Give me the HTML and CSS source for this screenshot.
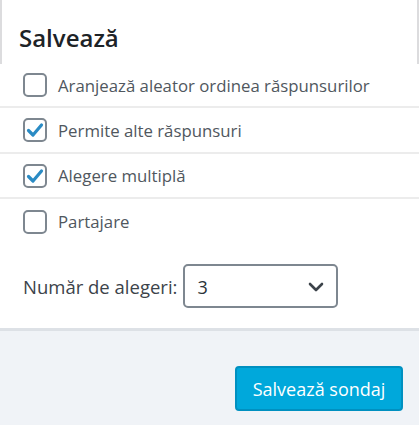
FILE: index.html
```html
<!DOCTYPE html>
<html lang="ro">
<head>
<meta charset="utf-8">
<link rel="stylesheet" href="styles.css">
</head>
<body>
<div class="panel">
  <div class="header"><h2 class="title">Salvează</h2></div>
  <ul class="options">
    <li class="option"><span class="box"></span><span class="label">Aranjează aleator ordinea răspunsurilor</span></li>
    <li class="option"><span class="box checked"><svg viewBox="0 0 20 20" width="20" height="20"><path d="M3.5 10.5 L8 15 L16.5 5" fill="none" stroke="#2a8bc4" stroke-width="3.2" stroke-linecap="round" stroke-linejoin="round"/></svg></span><span class="label">Permite alte răspunsuri</span></li>
    <li class="option"><span class="box checked"><svg viewBox="0 0 20 20" width="20" height="20"><path d="M3.5 10.5 L8 15 L16.5 5" fill="none" stroke="#2a8bc4" stroke-width="3.2" stroke-linecap="round" stroke-linejoin="round"/></svg></span><span class="label">Alegere multiplă</span></li>
    <li class="option"><span class="box"></span><span class="label">Partajare</span></li>
  </ul>
  <div class="choices">
    <span class="choices-label">Număr de alegeri:</span>
    <div class="select"><span class="select-value">3</span><svg class="chev" viewBox="0 0 16 10" width="16" height="10"><path d="M2 2 L8 8 L14 2" fill="none" stroke="#3c434a" stroke-width="2.6" stroke-linecap="round" stroke-linejoin="round"/></svg></div>
  </div>
</div>
<div class="footer">
  <button class="save">Salvează sondaj</button>
</div>
</body>
</html>
```
FILE: styles.css
```css
* { box-sizing: border-box; }
html, body { margin: 0; padding: 0; }
body {
  width: 419px;
  height: 425px;
  background: #f0f3f7;
  font-family: "Open Sans", "Noto Sans", sans-serif;
  overflow: hidden;
}
.panel {
  background: #fff;
  border-bottom: 3px solid #dde1e6;
}
.header {
  height: 64px;
  border-left: 2px solid #dcdcde;
  border-right: 2px solid #dcdcde;
  padding: 23px 0 0 17px;
}
.title {
  margin: 0;
  font-size: 24px;
  font-weight: 600;
  color: #1d2327;
  line-height: 30px;
}
.options {
  list-style: none;
  margin: 0;
  padding: 0;
}
.option {
  display: flex;
  align-items: center;
  height: 45px;
  padding-left: 23px;
  border-bottom: 2px solid #ececec;
}
.option:nth-child(1) { height: 44px; }
.option:nth-child(2) { height: 46px; }
.option:last-child { border-bottom: 0; }
.box {
  width: 24px;
  height: 24px;
  border: 2px solid #7e8790;
  border-radius: 5px;
  display: flex;
  align-items: center;
  justify-content: center;
  flex: none;
}
.label {
  margin-left: 11px;
  font-size: 16.8px;
  color: #50575e;
}
.choices {
  display: flex;
  align-items: center;
  padding: 20px 0 20px 23px;
}
.choices-label {
  font-size: 18.5px;
  color: #3c434a;
  margin-right: 6px;
}
.select {
  width: 155px;
  height: 44px;
  border: 2px solid #7e8790;
  border-radius: 5px;
  display: flex;
  align-items: center;
  justify-content: space-between;
  padding: 2px 12px 0 12px;
}
.select-value {
  font-size: 18px;
  color: #2c3338;
}
.footer {
  display: flex;
  justify-content: flex-end;
  padding: 35px 16px 0 0;
}
.save {
  width: 168px;
  height: 45px;
  background: #00a8db;
  border: 2px solid #0090c0;
  border-radius: 4px;
  color: #fff;
  font-family: "Open Sans", "Noto Sans", sans-serif;
  font-size: 18px;
}
```
